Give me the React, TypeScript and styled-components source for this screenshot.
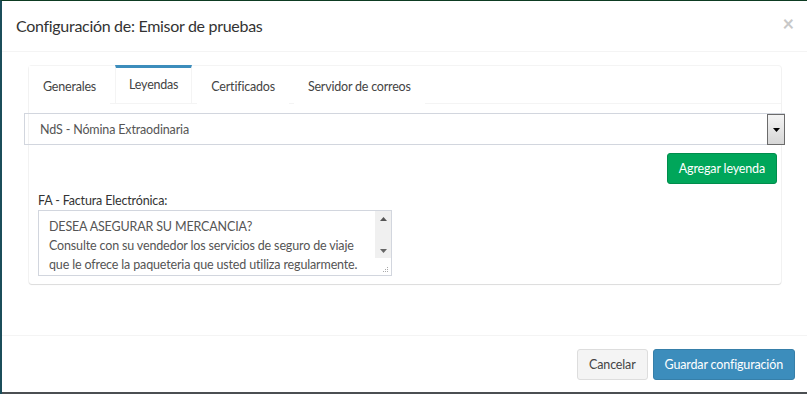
import React from 'react';
import styled, { createGlobalStyle } from 'styled-components';

const Global = createGlobalStyle`
  html, body {
    margin: 0;
    padding: 0;
    width: 807px;
    height: 394px;
    overflow: hidden;
    background: #4b4f52;
  }
  body {
    border-top: 1px solid #0d3b22;
    border-left: 2px solid #1b4d5a;
    box-sizing: border-box;
    font-family: Lato, 'Open Sans', sans-serif;
    letter-spacing: -0.15px;
  }
`;

/* ── Modal shell ── */

const Modal = styled.div`
  width: 808px;
  height: 391px;
  background: #fff;
  display: flex;
  flex-direction: column;
  color: #333;
`;

const Header = styled.div`
  display: flex;
  align-items: flex-start;
  justify-content: space-between;
  padding: 14px 15px 0 14px;
  height: 36px;
  border-bottom: 1px solid #f4f4f4;
`;

const Title = styled.h4`
  margin: 0;
  font-size: 16px;
  font-weight: 400;
  letter-spacing: -0.3px;
  line-height: 22px;
  color: #333;
`;

const Close = styled.span`
  margin-top: -2px;
  font-size: 20px;
  font-weight: 700;
  line-height: 20px;
  color: #c8c8c8;
  margin-right: 1px;
`;

const Body = styled.div`
  flex: 1;
  padding: 14px 27px 0 27px;
`;

const Footer = styled.div`
  display: flex;
  justify-content: flex-end;
  gap: 5px;
  padding: 13px 15px 12px;
  border-top: 1px solid #f4f4f4;
`;

/* ── Tabbed panel ── */

const Panel = styled.div`
  width: 752px;
  background: #fff;
  border-radius: 3px;
  box-shadow: 0 1px 1px rgba(0, 0, 0, 0.1), 0 0 0 1px #f4f4f4;
`;

const TabBar = styled.div`
  display: flex;
  height: 37px;
  border-bottom: 1px solid #f4f4f4;
`;

const Tab = styled.div<{ $active?: boolean }>`
  box-sizing: border-box;
  height: 38px;
  margin-top: ${({ $active }) => ($active ? '-1px' : '0')};
  margin-right: 5px;
  padding: ${({ $active }) => ($active ? '7px 13px 0 13px' : '8px 13px 0 13px')};
  font-size: 12.5px;
  letter-spacing: -0.2px;
  color: #444;
  background: #fff;
  border-top: 3px solid ${({ $active }) => ($active ? '#3c8dbc' : 'transparent')};
  border-left: 1px solid ${({ $active }) => ($active ? '#f4f4f4' : 'transparent')};
  border-right: 1px solid ${({ $active }) => ($active ? '#f4f4f4' : 'transparent')};
  line-height: 20px;
`;

const Content = styled.div`
  padding: 9px 4px 8px 9px;
  display: flex;
  flex-direction: column;
`;

/* ── Select ── */

const Select = styled.div`
  margin: 0 -8px 0 -14px;
  height: 30px;
  border: 1px solid #d2d6de;
  display: flex;
  align-items: center;
  justify-content: space-between;
  font-size: 12.5px;
  color: #555;
`;

const SelectText = styled.span`
  padding-left: 15px;
`;

const DropButton = styled.span`
  box-sizing: border-box;
  width: 18px;
  height: 31px;
  margin-top: 1px;
  margin-right: -1px;
  border: 1px solid #6b6b6b;
  background: linear-gradient(#f4f4f4, #d6d6d6);
  display: flex;
  align-items: center;
  justify-content: center;
`;

/* ── Buttons ── */

const Button = styled.button<{ $variant: 'success' | 'primary' | 'default' }>`
  font-family: inherit;
  font-size: 12.5px;
  letter-spacing: -0.15px;
  height: 31px;
  padding: 0 11px;
  border-radius: 3px;
  cursor: pointer;
  border: 1px solid
    ${({ $variant }) =>
      $variant === 'success' ? '#008d4c' : $variant === 'primary' ? '#367fa9' : '#ddd'};
  background: ${({ $variant }) =>
    $variant === 'success' ? '#00a65a' : $variant === 'primary' ? '#3c8dbc' : '#f4f4f4'};
  color: ${({ $variant }) => ($variant === 'default' ? '#444' : '#fff')};
`;

const ActionRow = styled.div`
  display: flex;
  justify-content: flex-end;
  margin-top: 8px;
`;

/* ── Legend field ── */

const Label = styled.label`
  margin-top: 8px;
  font-size: 12.5px;
  line-height: 18px;
  color: #333;
`;

const TextBox = styled.div`
  width: 352px;
  height: 64px;
  border: 1px solid #d2d6de;
  display: flex;
`;

const TextLines = styled.div`
  flex: 1;
  padding: 6px 10px 0;
  font-size: 12.5px;
  line-height: 19px;
  color: #555;
  white-space: nowrap;
  overflow: hidden;
`;

const ScrollBar = styled.div`
  width: 16px;
  display: flex;
  flex-direction: column;
`;

const Track = styled.div`
  height: 47px;
  background: #f0f0f0;
  display: flex;
  flex-direction: column;
  justify-content: space-between;
  align-items: center;
  padding: 6px 0 5px;
  box-sizing: border-box;
`;

const Grip = styled.div`
  flex: 1;
  display: flex;
  align-items: flex-end;
  justify-content: flex-end;
  padding: 0 2px 2px 0;
`;

const Arrow = ({ up }: { up?: boolean }) => (
  <svg width="7" height="4" viewBox="0 0 7 4">
    <polygon points={up ? '0,4 7,4 3.5,0' : '0,0 7,0 3.5,4'} fill={up ? '#555' : '#666'} />
  </svg>
);

const GripSvg = () => (
  <svg width="7" height="7" viewBox="0 0 7 7" fill="#aaa">
    <rect x="5" y="1" width="1" height="1" />
    <rect x="3" y="3" width="1" height="1" />
    <rect x="5" y="3" width="1" height="1" />
    <rect x="1" y="5" width="1" height="1" />
    <rect x="3" y="5" width="1" height="1" />
    <rect x="5" y="5" width="1" height="1" />
  </svg>
);

/* ── Data ── */

const TABS = ['Generales', 'Leyendas', 'Certificados', 'Servidor de correos'];

const LEGEND = [
  'DESEA ASEGURAR SU MERCANCIA?',
  'Consulte con su vendedor los servicios de seguro de viaje',
  'que le ofrece la paqueteria que usted utiliza regularmente.',
];

/* ── Component ── */

export default function App() {
  return (
    <>
      <Global />
      <Modal>
        <Header>
          <Title>Configuración de: Emisor de pruebas</Title>
          <Close>×</Close>
        </Header>

        <Body>
          <Panel>
            <TabBar>
              {TABS.map((t) => (
                <Tab key={t} $active={t === 'Leyendas'}>
                  {t}
                </Tab>
              ))}
            </TabBar>

            <Content>
              <Select>
                <SelectText>NdS - Nómina Extraodinaria</SelectText>
                <DropButton>
                  <svg width="7" height="4" viewBox="0 0 7 4">
                    <polygon points="0,0 7,0 3.5,4" fill="#000" />
                  </svg>
                </DropButton>
              </Select>

              <ActionRow>
                <Button $variant="success">Agregar leyenda</Button>
              </ActionRow>

              <Label>FA - Factura Electrónica:</Label>
              <TextBox>
                <TextLines>
                  {LEGEND.map((l) => (
                    <div key={l}>{l}</div>
                  ))}
                </TextLines>
                <ScrollBar>
                  <Track>
                    <Arrow up />
                    <Arrow />
                  </Track>
                  <Grip>
                    <GripSvg />
                  </Grip>
                </ScrollBar>
              </TextBox>
            </Content>
          </Panel>
        </Body>

        <Footer>
          <Button $variant="default">Cancelar</Button>
          <Button $variant="primary">Guardar configuración</Button>
        </Footer>
      </Modal>
    </>
  );
}
